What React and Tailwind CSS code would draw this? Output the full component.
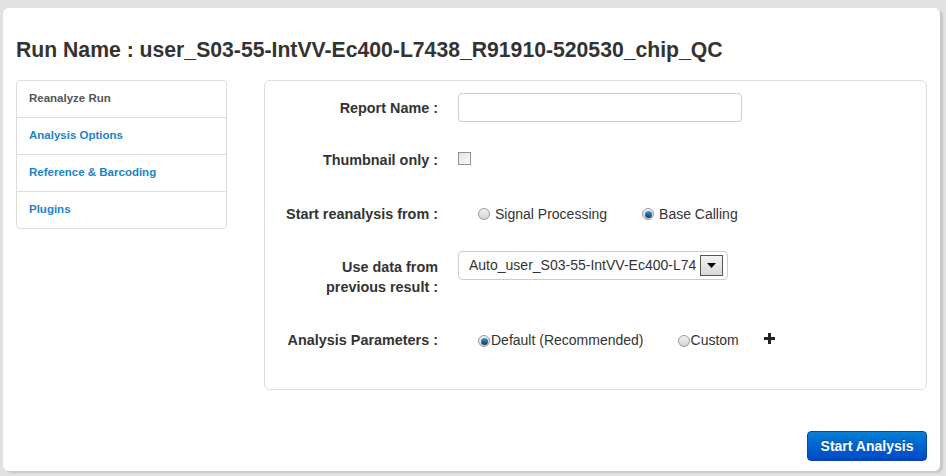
import React, { useState } from "react";

const font = { fontFamily: '"Liberation Sans", Arial, sans-serif' };

function Radio({ checked, onClick }) {
  return (
    <span
      onClick={onClick}
      className="relative inline-block w-[12px] h-[12px] rounded-full border border-[#9a9a9a] bg-gradient-to-b from-[#f4f4f4] to-[#d2d2d2] shrink-0"
    >
      {checked && (
        <span className="absolute left-[1.5px] top-[1.5px] w-[7px] h-[7px] rounded-full bg-gradient-to-b from-[#3d9ad8] to-[#0a3a63]" />
      )}
    </span>
  );
}

function Label({ children }) {
  return (
    <div className="w-[173px] shrink-0 text-right text-[14.4px] leading-[20px] font-bold text-[#333]">
      {children}
    </div>
  );
}

export default function App() {
  const [reanalyze, setReanalyze] = useState("base");
  const [params, setParams] = useState("default");
  const [thumb, setThumb] = useState(false);

  const navItems = ["Analysis Options", "Reference & Barcoding", "Plugins"];

  return (
    <div
      className="w-screen h-screen bg-[#e2e2e2] pl-[3px] pt-[8px] pr-[6px] pb-[5px] overflow-hidden"
      style={font}
    >
      <div className="h-full bg-white rounded-md shadow-[3px_2px_2px_rgba(0,0,0,0.12)] px-[13px] pt-[28px]">
        <h1 className="text-[21.2px] leading-[28px] font-bold text-[#333] mb-[16px]">
          Run Name : user_S03-55-IntVV-Ec400-L7438_R91910-520530_chip_QC
        </h1>

        <div className="flex items-start gap-[37px]">
          <div className="w-[211px] shrink-0 border border-[#ddd] rounded-[4px] text-[11.5px] font-bold">
            <div className="h-[36px] flex items-center px-[12px] text-[#555]">
              Reanalyze Run
            </div>
            {navItems.map((item) => (
              <div
                key={item}
                className="h-[37px] flex items-center px-[12px] border-t border-[#ddd] text-[#1a84c7]"
              >
                {item}
              </div>
            ))}
          </div>

          <div className="flex-1">
            <div className="border border-[#ddd] rounded-md pt-[12px] pb-[39px]">
              <div className="flex items-center gap-[20px] h-[29px]">
                <Label>Report Name :</Label>
                <input
                  type="text"
                  className="w-[284px] h-[29px] border border-[#ccc] rounded-[4px] px-2 text-[14px] outline-none"
                />
              </div>

              <div className="flex items-center gap-[20px] h-[20px] mt-[28px]">
                <Label>Thumbnail only :</Label>
                <span
                  onClick={() => setThumb(!thumb)}
                  className="inline-block w-[13px] h-[13px] -mt-[3px] border border-[#8f8f8f] bg-gradient-to-br from-[#e2e2e2] to-[#fbfbfb]"
                />
              </div>

              <div className="flex items-center h-[20px] mt-[34px]">
                <Label>Start reanalysis from :</Label>
                <div className="flex items-center ml-[40px] text-[14px] text-[#333]">
                  <span className="mt-[3px]">
                    <Radio
                      checked={reanalyze === "signal"}
                      onClick={() => setReanalyze("signal")}
                    />
                  </span>
                  <span className="ml-[5px]">Signal Processing</span>
                  <span className="ml-[35px] mt-[3px]">
                    <Radio
                      checked={reanalyze === "base"}
                      onClick={() => setReanalyze("base")}
                    />
                  </span>
                  <span className="ml-[5px]">Base Calling</span>
                </div>
              </div>

              <div className="flex items-start gap-[20px] mt-[28px]">
                <div className="pt-[5px]">
                  <Label>
                    Use data from
                    <br />
                    previous result :
                  </Label>
                </div>
                <div className="w-[270px] h-[29px] -mt-[1px] border border-[#ccc] rounded-[4px] flex items-center pl-[10px] pr-[4px] text-[14px] text-[#333]">
                  <span className="flex-1 overflow-hidden whitespace-nowrap">
                    Auto_user_S03-55-IntVV-Ec400-L74
                  </span>
                  <span className="w-[23px] h-[21px] ml-[2px] border border-[#555] bg-gradient-to-b from-[#f2f2f2] to-[#d8d8d8] flex items-center justify-center shrink-0">
                    <svg width="9" height="5" viewBox="0 0 9 5">
                      <path d="M0 0h9L4.5 5z" fill="#000" />
                    </svg>
                  </span>
                </div>
              </div>

              <div className="flex items-center h-[20px] mt-[33px]">
                <Label>Analysis Parameters :</Label>
                <div className="flex items-center ml-[40px] text-[14px] text-[#333]">
                  <span className="mt-[5px]">
                    <Radio
                      checked={params === "default"}
                      onClick={() => setParams("default")}
                    />
                  </span>
                  <span className="ml-[1px]">Default (Recommended)</span>
                  <span className="ml-[34px] mt-[5px]">
                    <Radio
                      checked={params === "custom"}
                      onClick={() => setParams("custom")}
                    />
                  </span>
                  <span className="ml-[1px]">Custom</span>
                  <svg
                    className="ml-[25px] -mt-[4px]"
                    width="11"
                    height="11"
                    viewBox="0 0 11 11"
                  >
                    <path d="M4 0h3v4h4v3H7v4H4V7H0V4h4z" fill="#222" />
                  </svg>
                </div>
              </div>
            </div>

            <div className="flex justify-end mt-[41px]">
              <button className="h-[30px] w-[120px] rounded-[4px] border border-[#0645a8] bg-gradient-to-b from-[#0a7fd4] to-[#0446c8] text-white text-[14px] font-bold [text-shadow:0_-1px_0_rgba(0,0,0,0.25)]">
                Start Analysis
              </button>
            </div>
          </div>
        </div>
      </div>
    </div>
  );
}
